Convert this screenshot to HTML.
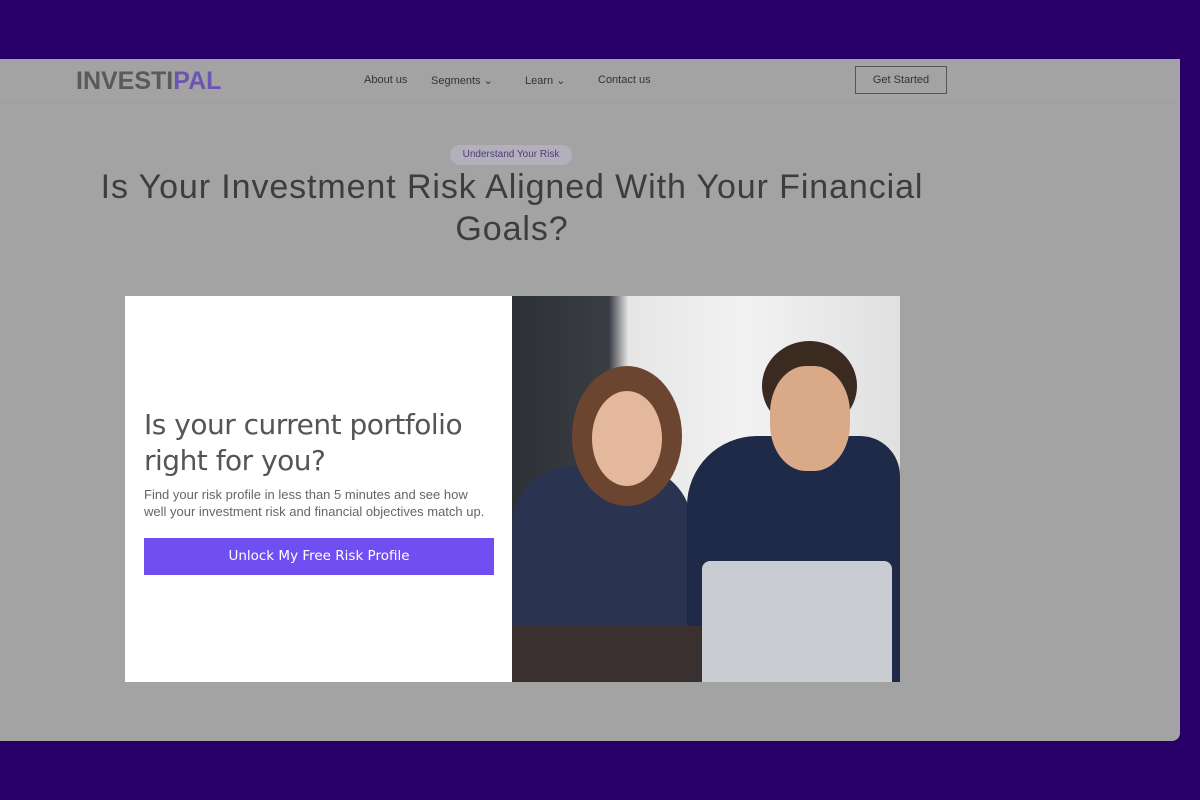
<!DOCTYPE html>
<html><head><style>
*{margin:0;padding:0;box-sizing:border-box}
body{width:1200px;height:800px;background:#29006a;position:relative;overflow:hidden;font-family:"Liberation Sans",sans-serif}
.panel{position:absolute;left:0;top:59px;width:1180px;height:682px;background:#a3a3a3;border-radius:0 0 8px 0}
.nav{position:absolute;left:0;top:0;width:100%;height:44px;border-bottom:1px solid #9d9d9d}
.logo{position:absolute;left:76px;top:8px;font-size:25px;font-weight:bold;color:#5a5a5a;letter-spacing:0px}
.logo span{color:#6b55b0}
.nl{position:absolute;top:15px;font-size:11px;color:#333}
.btn{position:absolute;left:855px;top:7px;width:92px;height:28px;border:1px solid #555;font-size:11px;color:#333;text-align:center;line-height:26px}
.tag{position:absolute;left:450px;top:86px;width:122px;height:20px;background:#b3b0bb;border-radius:10px;font-size:10px;color:#4a3d7a;text-align:center;line-height:20px}
h1{position:absolute;left:82px;top:107px;width:860px;text-align:center;font-weight:normal;font-size:34px;letter-spacing:0.9px;color:#3d3d3d;line-height:42px}
.card{position:absolute;left:125px;top:237px;width:775px;height:386px;background:#fff}
.card h2{position:absolute;left:19px;top:111px;font-family:"DejaVu Sans",sans-serif;font-weight:normal;font-size:28px;color:#555;line-height:36px;letter-spacing:-0.5px}
.card p{position:absolute;left:19px;top:190px;width:345px;font-size:13px;color:#666;line-height:17px}
.cta{position:absolute;left:19px;top:242px;width:350px;height:37px;background:#6f4ef2;color:#fff;font-family:"DejaVu Sans",sans-serif;font-size:13.5px;text-align:center;line-height:37px}
.photo{position:absolute;left:387px;top:0;width:388px;height:386px;background:linear-gradient(90deg,#2d3035 0,#3a3d44 25%,#e6e6e6 30%,#f2f2f2 60%,#e0e0e0 100%);overflow:hidden}
</style></head><body>
<div class="panel">
<div class="nav">
<div class="logo">INVESTI<span>PAL</span></div>
<div class="nl" style="left:364px">About us</div>
<div class="nl" style="left:431px">Segments &#8964;</div>
<div class="nl" style="left:525px">Learn &#8964;</div>
<div class="nl" style="left:598px">Contact us</div>
<div class="btn">Get Started</div>
</div>
<div class="tag">Understand Your Risk</div>
<h1>Is Your Investment Risk Aligned With Your Financial Goals?</h1>
<div class="card">
<h2>Is your current portfolio<br>right for you?</h2>
<p>Find your risk profile in less than 5 minutes and see how well your investment risk and financial objectives match up.</p>
<div class="cta">Unlock My Free Risk Profile</div>
<div class="photo">
<div style="position:absolute;left:0;top:170px;width:180px;height:216px;background:#2a3350;border-radius:60px 60px 0 0"></div>
<div style="position:absolute;left:60px;top:70px;width:110px;height:140px;background:#6b4530;border-radius:50%"></div>
<div style="position:absolute;left:80px;top:95px;width:70px;height:95px;background:#e3b89c;border-radius:50%"></div>
<div style="position:absolute;left:175px;top:140px;width:213px;height:246px;background:#1f2a48;border-radius:70px 40px 0 0"></div>
<div style="position:absolute;left:250px;top:45px;width:95px;height:90px;background:#3a2a20;border-radius:50%"></div>
<div style="position:absolute;left:258px;top:70px;width:80px;height:105px;background:#d9a988;border-radius:45%"></div>
<div style="position:absolute;left:190px;top:265px;width:190px;height:121px;background:#c9cdd2;border-radius:8px 8px 0 0"></div>
<div style="position:absolute;left:0;top:330px;width:190px;height:56px;background:#3a3030"></div>
</div>
</div>
</div>
</body></html>
